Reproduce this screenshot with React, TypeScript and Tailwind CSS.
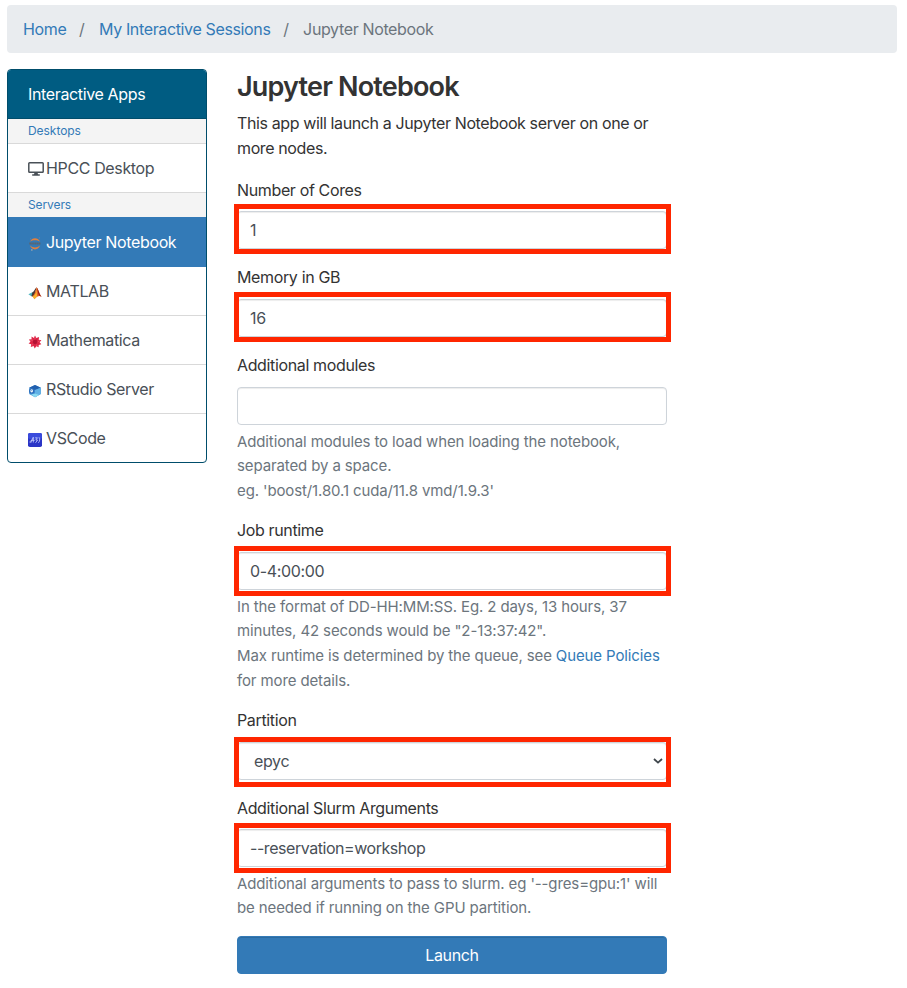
import type { ReactNode } from 'react';

function Jupyter() {
  return (
    <svg viewBox="0 0 14 14" className="h-3.5 w-3.5">
      <path d="M2 4.800C3 2.200 4.900 1.200 7 1.200s4.100 1 5 3.600C10.500 3.600 8.900 3.200 7 3.200s-3.600.4-5 1.600z" fill="#e0803f" />
      <path d="M2 8.600C3 11.300 4.900 12.400 7 12.400s4.100-1.100 5-3.800C10.500 9.900 8.900 10.400 7 10.400s-3.600-.5-5-1.800z" fill="#e0803f" />
      <path d="M1.300 6.500h11.400" stroke="#5b6470" strokeWidth="2" strokeDasharray="1.600 .3" />
      <circle cx="11.400" cy=".9" r=".7" fill="#6f8195" />
      <circle cx="3.800" cy="12.900" r=".9" fill="#93a0ad" />
      <circle cx="2.600" cy="1.800" r=".5" fill="#6f8195" />
    </svg>
  );
}

function Matlab() {
  return (
    <svg viewBox="0 0 14 14" className="h-3.5 w-3.5">
      <path d="M.4 8.300 4.400 6.300 6 8.500 3.400 10.300z" fill="#4fb5c0" />
      <path d="M4.400 6.300C6.200 5.800 6.900 2.400 8.600 1.300L6.600 9 5 10.500 3.400 10.300z" fill="#4b3a35" />
      <path d="M8.600 1.300C10.300 3 11.400 8.300 13.700 10.900 11.600 9.600 9.800 9.600 6.300 13.200 6 11.700 5.200 10.600 3.800 10.300 6.900 9.600 7.500 4 8.600 1.300z" fill="#e4602a" />
      <path d="M8.500 2C8.300 6 7.600 9.300 4.600 10.500L6.300 13.200C7.500 12 8.200 11 9 10.400z" fill="#f8b52c" />
      <path d="M8.700 1.500C9.600 3.500 9.800 7 11 9.600L13.500 10.800C11.400 8.300 10.300 3 8.700 1.500z" fill="#8e2018" />
    </svg>
  );
}

function Mathematica() {
  return (
    <svg viewBox="0 0 14 14" className="h-3.5 w-3.5">
      <path d="M7 .6 8.300 3.100 11.100 2 10.700 4.700 13.400 5.200 11.600 7.300 13.300 9.300 10.700 9.900 10.600 12.300 8.300 11.200 6.700 13.500 5.600 11.100 2.800 12 3.200 9.300.6 8.500 2.500 6.700.9 4.500 3.600 4.300 3.500 1.600 5.900 2.900z" fill="#de2446" />
      <path d="M5.200 5.100 8.200 4.300 9.700 7 7.800 9.600 4.900 8.600z" fill="#b51234" />
      <path d="M7 1.500v3.200M12 5.600 9.500 7M10 11.500 7.800 9.500M3.500 11.200 5 8.600M1.800 5l3.400.2" stroke="#f2647b" strokeWidth=".6" />
    </svg>
  );
}

function RStudio() {
  return (
    <svg viewBox="0 0 14 14" className="h-3.5 w-3.5">
      <path d="M7 1 12.800 3.800v6.300L7 13.200 1.200 10V3.800z" fill="#448fd3" />
      <path d="M7 1 12.800 3.800 7 6 1.200 3.800z" fill="#2260ae" />
      <path d="M7 6 12.800 3.800v6.300L7 13.200z" fill="#62b1e5" />
      <path d="M3 10.600 7 9.500l4 1.500-4 2.200z" fill="#8bdaf1" />
      <circle cx="3.700" cy="6.900" r="2.700" fill="#2d6fbd" />
      <ellipse cx="3.700" cy="6.800" rx="1.300" ry="1.600" fill="#fff" />
      <path d="M3.700 6.100v1" stroke="#2d6fbd" strokeWidth=".7" />
    </svg>
  );
}

function Code() {
  return (
    <svg viewBox="0 0 14 14" className="h-3.5 w-3.5">
      <rect width="14" height="14" rx="1.800" fill="#2b35c6" />
      <rect width="14" height="6" rx="1.800" fill="#3a4bdc" />
      <path d="M1.500 9 4.200 6.800M2.600 10 5.300 4.200v5.300M3.500 7.300h3.200M7.200 4.800h2.200L7.800 7h1.800L7.500 9.800M11 4.200c1 1.500 1 4-.6 5.600" stroke="#c9d0ff" strokeWidth=".8" fill="none" />
    </svg>
  );
}

function Monitor() {
  return (
    <svg viewBox="0 0 16 14" className="h-3.5 w-4">
      <rect x=".8" y=".8" width="14.400" height="9.400" rx=".8" fill="none" stroke="#495057" strokeWidth="1.500" />
      <path d="M6.500 10.500h3l.5 1.700h1.800v1.500H4.200v-1.500H6z" fill="#495057" />
    </svg>
  );
}

function AppLink({ icon, name, active, last }: { icon: ReactNode; name: ReactNode; active?: boolean; last?: boolean }) {
  return (
    <a
      className={
        active
          ? 'flex h-[50px] items-center bg-[#337ab7] pl-5 text-white'
          : last
            ? 'flex h-12 items-center pl-5 text-[#495057]'
            : 'flex h-[49px] items-center border-b border-[#d9d9d9] pl-5 text-[#495057]'
      }
    >
      <span className="mr-1 mt-[3px] shrink-0">{icon}</span>
      {name}
    </a>
  );
}

const frame = 'pointer-events-none absolute -left-[3px] h-[50px] w-[437px] border-[5px] border-[#ff2600]';
const control =
  'flex h-[38px] items-center justify-between rounded border border-[#ced4da] bg-white pl-3 text-[#495057] shadow-[inset_0_1px_1px_rgba(0,0,0,0.075)]';

type FieldProps = {
  label: ReactNode;
  value?: ReactNode;
  box?: string;
  leading?: string;
  className: string;
  children?: ReactNode;
};

function Field({ label, value, box, leading = 'leading-[23px]', className, children }: FieldProps) {
  return (
    <div className={className}>
      <div className={`mb-2 h-[25px] text-[#333] ${leading}`}>{label}</div>
      <div className="relative">
        <div className={control}>{value}</div>
        {box && <div className={`${frame} ${box}`} />}
      </div>
      {children && <div className="mt-[4.750px] whitespace-nowrap text-[15px] leading-[24.600px] tracking-[-0.12px] text-[#6c757d]">{children}</div>}
    </div>
  );
}

export default function App() {
  return (
    <div className="h-[988px] w-[907px] overflow-hidden bg-white pl-[7px] pr-2.5 pt-[5px] font-[Inter,sans-serif] text-[16px] tracking-[-0.36px]">
      <nav className="flex h-12 items-center rounded bg-[#e9ecef] pl-4 text-[#337ab7]">
        <a>Home</a>
        <span className="ml-[12.700px] mr-[14.500px] text-[#6c757d]">/</span>
        <a>My Interactive Sessions</a>
        <span className="ml-[12.700px] mr-[14.500px] text-[#6c757d]">/</span>
        <span className="text-[#6c757d]">Jupyter Notebook</span>
      </nav>
      <div className="mt-4 flex items-start">
        <aside className="w-[200px] overflow-hidden rounded border border-[#004d6b]">
          <div className="flex h-[49px] items-center border-b border-[#004d6b] bg-[#005c82] pl-5 text-white">Interactive Apps</div>
          <div className="flex h-[25px] items-center border-b border-[#d9d9d9] bg-[#f4f4f4] pl-5 text-[12px] tracking-[-0.05px] text-[#337ab7]">Desktops</div>
          <a className="flex h-[49px] items-center border-b border-[#d9d9d9] pl-5 text-[#495057]">
            <span className="mr-0.5 mt-0.5 shrink-0"><Monitor /></span>
            HPCC Desktop
          </a>
          <div className="flex h-6 items-center bg-[#f4f4f4] pl-5 text-[12px] tracking-[-0.1px] text-[#337ab7]">Servers</div>
          <AppLink active icon={<Jupyter />} name="Jupyter Notebook" />
          <AppLink icon={<Matlab />} name="MATLAB" />
          <AppLink icon={<Mathematica />} name="Mathematica" />
          <AppLink icon={<RStudio />} name="RStudio Server" />
          <AppLink last icon={<Code />} name="VSCode" />
        </aside>
        <main className="ml-[30px] w-[430px]">
          <h1 className="h-[42px] text-[27px] font-semibold leading-[36px] tracking-[-0.82px] text-[#333]">Jupyter Notebook</h1>
          <p className="h-[67px] whitespace-nowrap leading-[24.600px] tracking-[-0.38px] text-[#333]">
            This app will launch a Jupyter Notebook server on one or<br />more nodes.
          </p>
          <Field className="h-[88px]" label="Number of Cores" value="1" box="-top-[7px]" leading="leading-[25px]" />
          <Field className="h-[88px]" label="Memory in GB" value="16" box="-top-[7px]" />
          <Field className="h-[165px]" label="Additional modules">
            Additional modules to load when loading the notebook,<br />separated by a space.<br />eg. 'boost/1.80.1 cuda/11.8 vmd/1.9.3'
          </Field>
          <Field className="h-[190px]" label="Job runtime" value="0-4:00:00" box="-top-[6px]">
            In the format of DD-HH:MM:SS. Eg. 2 days, 13 hours, 37<br />minutes, 42 seconds would be "2-13:37:42".<br />
            Max runtime is determined by the queue, see <a className="text-[#337ab7]">Queue Policies</a><br />for more details.
          </Field>
          <Field
            className="h-[87px]"
            label="Partition"
            box="-top-[5px]"
            value={
              <>
                <span className="pl-1">epyc</span>
                <svg viewBox="0 0 10 6" className="mr-[3px] h-1.5 w-2.5"><path d="m1 1 4 3.600L9 1" fill="none" stroke="#3f464c" strokeWidth="1.800" /></svg>
              </>
            }
          />
          <Field
            className="h-[140px]"
            label="Additional Slurm Arguments"
            value={<span className="tracking-[-0.45px]">--reservation=workshop</span>}
            box="-top-[6px]"
            leading="leading-[25px]"
          >
            Additional arguments to pass to slurm. eg '--gres=gpu:1' will<br />be needed if running on the GPU partition.
          </Field>
          <button className="block h-[38px] w-full rounded border border-[#337ab7] bg-[#337ab7] text-white shadow-[inset_0_1px_0_rgba(0,0,0,0.12)]">Launch</button>
        </main>
      </div>
    </div>
  );
}
